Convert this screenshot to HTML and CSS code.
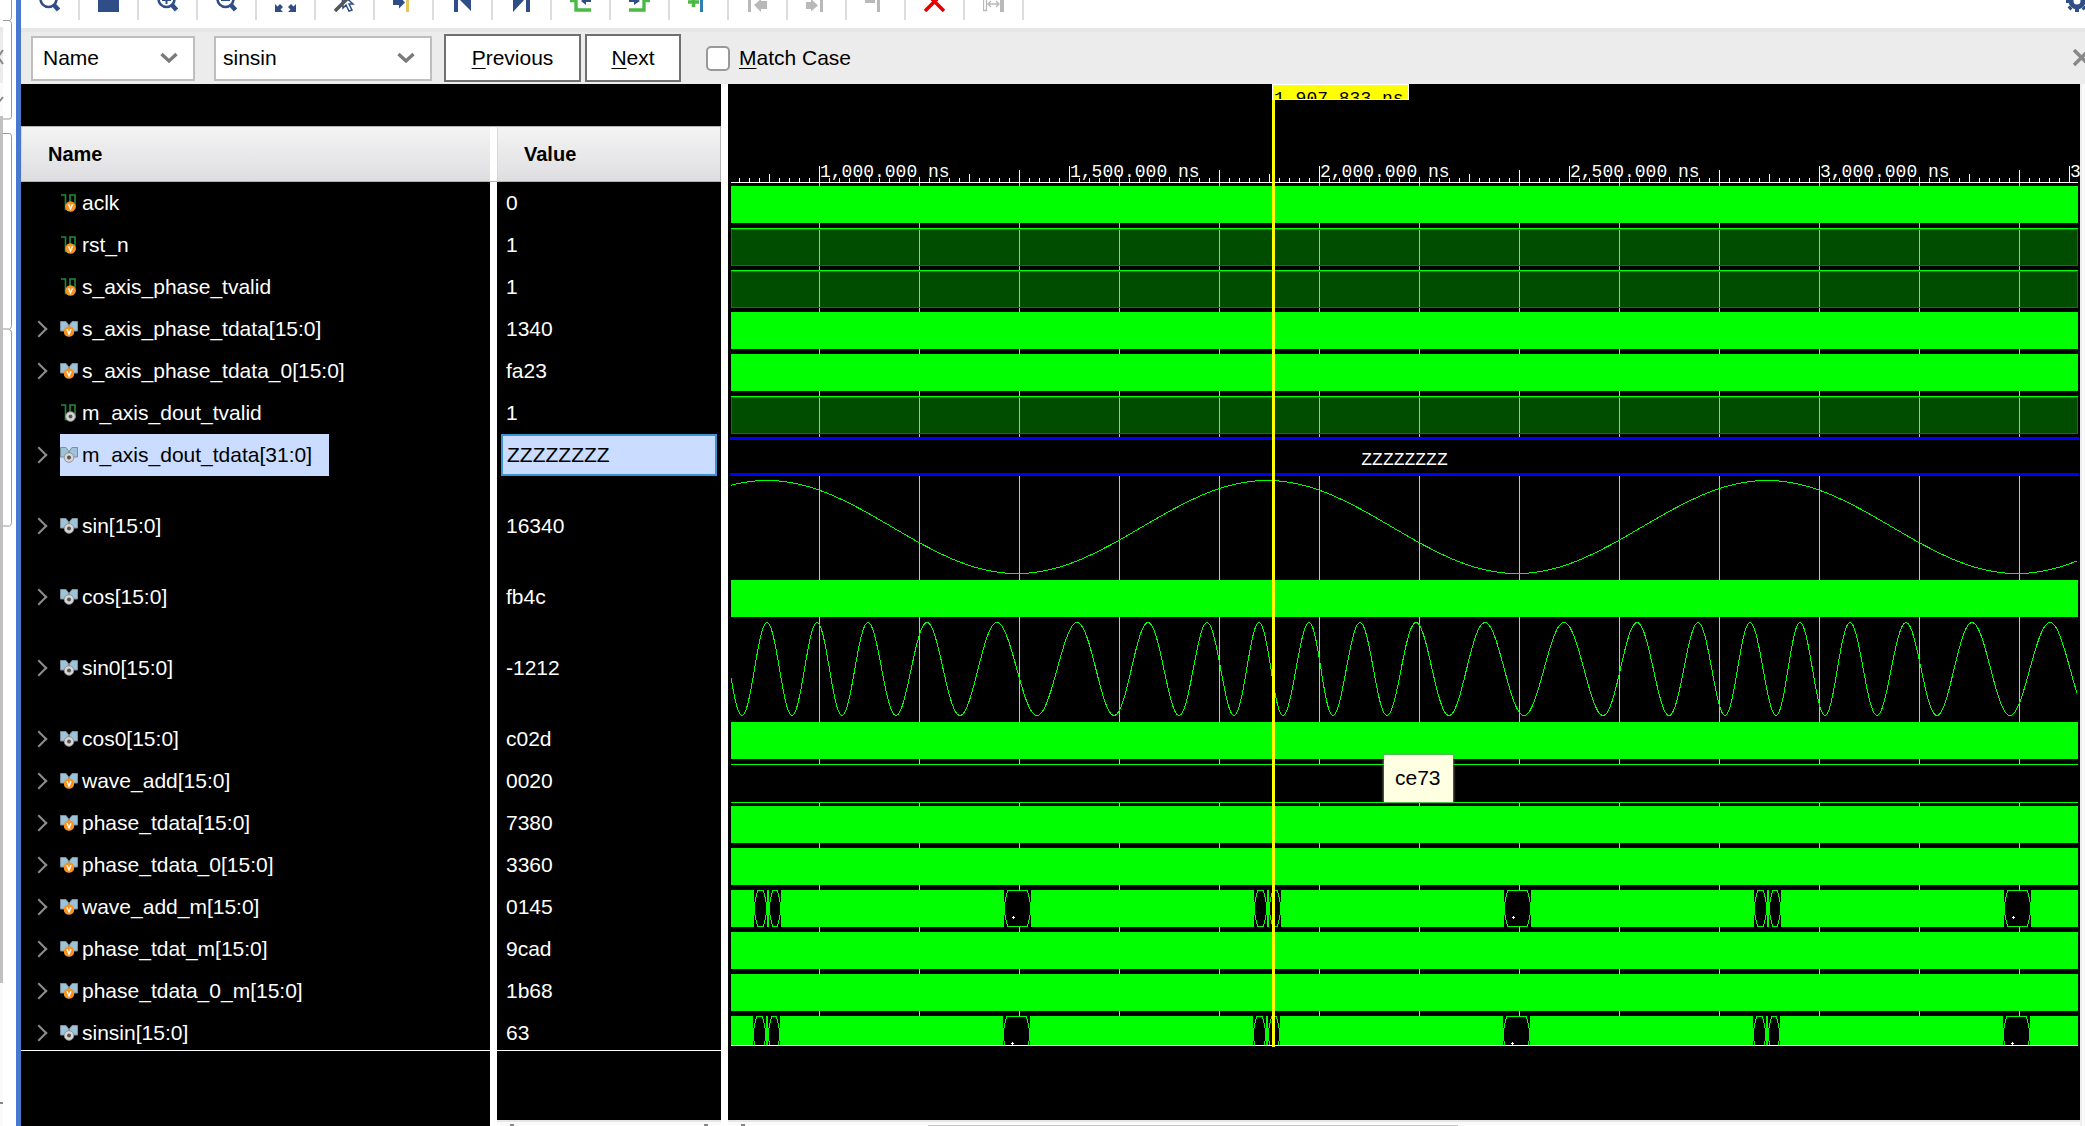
FILE: index.html
```html
<!DOCTYPE html>
<html lang="en">
<head>
<meta charset="utf-8">
<title>Waveform viewer</title>
<link rel="stylesheet" href="styles.css">
</head>
<body>
<svg class="defs" aria-hidden="true">
  <symbol id="badge-v" viewBox="0 0 10 10"><circle cx="5" cy="5" r="4.8" fill="#f7931e"/><path d="M3.2 3 5 7.2 6.8 3" fill="none" stroke="#fff" stroke-width="1.3"/></symbol>
  <symbol id="badge-o" viewBox="0 0 10 10"><circle cx="5" cy="5" r="4.4" fill="#d6d6d6" stroke="#8c8c8c" stroke-width=".8"/><circle cx="5" cy="5" r="1.8" fill="#555"/></symbol>
  <symbol id="wire" viewBox="0 0 18 18"><path d="M1 1h4.5v14.5H10V1h5v13" fill="none" stroke="#1f8a3a" stroke-width="1.6"/></symbol>
  <symbol id="bus" viewBox="0 0 18 18"><path d="M.5 1.5H6l3 4-3 5.5H.5zM17.500 1.500H12l-3 4 3 5.500h5.500z" fill="#9cc3d8" stroke="#7b8f9c"/></symbol>
  <symbol id="wire-v" viewBox="0 0 18 18"><use href="#wire" width="18" height="18"/><use href="#badge-v" x="5" y="7" width="11" height="11"/></symbol>
  <symbol id="wire-o" viewBox="0 0 18 18"><use href="#wire" width="18" height="18"/><use href="#badge-o" x="5" y="7" width="11" height="11"/></symbol>
  <symbol id="bus-v" viewBox="0 0 18 18"><use href="#bus" width="18" height="18"/><use href="#badge-v" x="3.500" y="6" width="11" height="11"/></symbol>
  <symbol id="bus-o" viewBox="0 0 18 18"><use href="#bus" width="18" height="18"/><use href="#badge-o" x="3.500" y="6" width="11" height="11"/></symbol>
  <symbol id="lens" viewBox="0 0 21 22"><circle cx="9.500" cy="9" r="8" fill="none" stroke="#2f4e87" stroke-width="2.600"/><path d="m15 15 4.500 5" stroke="#2f4e87" stroke-width="4.500"/></symbol>
  <symbol id="chev" viewBox="0 0 18 12"><path d="m1.500 2 7.500 7 7.500-7" fill="none" stroke="#7a7a7a" stroke-width="3.400"/></symbol>
</svg>

<div class="app">
  <aside class="neighbor">
    <svg width="16" height="1126" viewBox="0 0 16 1126" aria-hidden="true">
      <path fill="#e6e6e6" d="M0 27h3v4H0z"/><path fill="#ececec" d="M0 31h3v52H0z"/><path fill="#fafafa" d="M0 83h3v1043H0z"/>
      <path fill="#c0c0c0" d="M0 116h3v867H0z"/>
      <path d="m3 50-5 7 5 7M3 97l-4 5M0 1103h3" fill="none" stroke="#888" stroke-width="2"/>
      <path d="M11.500 0v17q0 3-2 3.500H3M9 20.500q2.500.5 2.500 3v93q0 2.500-2 2.500H3M3 133.500h6.500q2 0 2 3v189q0 3-2 3.500H3M9 329.500q2.500.5 2.500 3v190q0 3-2 3.500H3" fill="none" stroke="#999"/>
    </svg>
  </aside>

  <main class="viewer">
    <div class="toolbar" role="toolbar" aria-label="Waveform">
      <button aria-label="Search"><svg class="ti"><use href="#lens"/></svg></button>
      <button aria-label="Save"><svg class="ti"><path fill="#2f4e87" d="M0 2h21v20H0z"/></svg></button>
      <button aria-label="Zoom in"><svg class="ti"><use href="#lens"/><path d="M5 10h9M9.500 5v9" stroke="#2f4e87" stroke-width="2"/></svg></button>
      <button aria-label="Zoom out"><svg class="ti"><use href="#lens"/><path d="M5 10h9" stroke="#2f4e87" stroke-width="2"/></svg></button>
      <button aria-label="Zoom fit"><svg class="ti"><path d="M0 14v8h8l-2.500-2.500L8 17l-3-3-2.500 2.500zM21 14v8h-8l2.500-2.500L13 17l3-3 2.500 2.500z" fill="#2f4e87"/></svg></button>
      <button aria-label="Select"><svg class="ti"><path d="m8 4 1 14 3-3 3 6 3-1-3-6h4z" fill="#fff" stroke="#2f4e87" stroke-width="1.500"/><path d="M1 21 14 8" stroke="#555" stroke-width="3.500"/></svg></button>
      <button aria-label="Go to cursor"><svg class="ti"><path d="M0 9h5V5l7 7.500-6 6V15H0z" fill="#2f4e87"/><path fill="#e3c75b" d="M13 0h3v22h-3z"/></svg></button>
      <button aria-label="Go to start"><svg class="ti"><path fill="#2f4e87" d="M2 0h4v22H2zM19 1v20L8 10z"/></svg></button>
      <button aria-label="Go to end"><svg class="ti"><path fill="#2f4e87" d="M15 0h4v22h-4zM2 0v22l11-12z"/></svg></button>
      <button aria-label="Previous transition"><svg class="ti"><path d="M0 10.500h6V20h15" fill="none" stroke="#4cb944" stroke-width="3.400"/><path d="M21 9v3h-5v3l-5-4 5-4v2z" fill="#2f4e87"/></svg></button>
      <button aria-label="Next transition"><svg class="ti"><path d="M0 20h15v-9.500h6" fill="none" stroke="#4cb944" stroke-width="3.400"/><path d="M0 9v3h5v3l6-4-6-4v2z" fill="#2f4e87"/></svg></button>
      <button aria-label="Add marker"><svg class="ti"><path d="M0 12h11M5.500 5v12" stroke="#4cb944" stroke-width="3.500"/><path fill="#2f7fb5" d="M12 0h3v22h-3z"/></svg></button>
      <button aria-label="Previous marker"><svg class="ti"><path fill="#b9b9b9" d="M1 0h3v22H1zM20 11v8h-6v3l-7-7 7-6v2z"/></svg></button>
      <button aria-label="Next marker"><svg class="ti"><path fill="#b9b9b9" d="M14 0h3v22h-3zM0 12h5V9l7 6.500-7 6V19H0z"/></svg></button>
      <button aria-label="Remove marker"><svg class="ti"><path fill="#b9b9b9" d="M12 0h3v22h-3zM0 10h10v3H0z"/></svg></button>
      <button aria-label="Delete"><svg class="ti"><path d="M1 2l19 19M20 2 1 21" stroke="#e80000" stroke-width="3.600"/></svg></button>
      <button aria-label="Swap cursors"><svg class="ti"><path fill="#b9b9b9" d="M17 0h4v22h-4z"/><path d="M.5 0v20.500h3V0M5 14h11M8 11l-3 3 3 3M13 11l3 3-3 3" fill="none" stroke="#b9b9b9" stroke-width="1.300"/></svg></button>
      <button class="settings" aria-label="Settings"><svg class="ti"><circle cx="11" cy="11" r="6" fill="none" stroke="#2f4e87" stroke-width="5"/><path d="M11 19v3M5 17l-2 2M17 17l2 2M0 11h3" stroke="#2f4e87" stroke-width="4"/></svg></button>
    </div>

    <form class="findbar">
      <span class="combo combo-field"><select aria-label="Search field"><option>Name</option></select><svg class="chev"><use href="#chev"/></svg></span>
      <span class="combo combo-text"><input type="text" value="sinsin" aria-label="Search text"><svg class="chev"><use href="#chev"/></svg></span>
      <span class="pair">
        <button type="button" class="btn btn-prev"><u>P</u>revious</button>
        <button type="button" class="btn btn-next"><u>N</u>ext</button>
      </span>
      <label class="match"><input type="checkbox"><span><u>M</u>atch Case</span></label>
      <button type="button" class="close" aria-label="Close"><svg width="18" height="18"><path d="m1 1 15 15M16 1 1 16" stroke="#888" stroke-width="3.500"/></svg></button>
    </form>

    <div class="panes">
      <section class="signals">
        <table>
          <colgroup><col class="c-name"><col class="c-value"></colgroup>
          <thead><tr><th scope="col">Name</th><th scope="col">Value</th></tr></thead>
          <tbody>
            <tr><td><div class="sig leaf"><svg><use href="#wire-v"/></svg>aclk</div></td><td>0</td></tr>
            <tr><td><div class="sig leaf"><svg><use href="#wire-v"/></svg>rst_n</div></td><td>1</td></tr>
            <tr><td><div class="sig leaf"><svg><use href="#wire-v"/></svg>s_axis_phase_tvalid</div></td><td>1</td></tr>
            <tr><td><div class="sig"><svg><use href="#bus-v"/></svg>s_axis_phase_tdata[15:0]</div></td><td>1340</td></tr>
            <tr><td><div class="sig"><svg><use href="#bus-v"/></svg>s_axis_phase_tdata_0[15:0]</div></td><td>fa23</td></tr>
            <tr><td><div class="sig leaf"><svg><use href="#wire-o"/></svg>m_axis_dout_tvalid</div></td><td>1</td></tr>
            <tr class="selected"><td><div class="sig"><svg><use href="#bus-o"/></svg>m_axis_dout_tdata[31:0]</div></td><td><div class="cell">ZZZZZZZZ</div></td></tr>
            <tr class="tall"><td><div class="sig"><svg><use href="#bus-o"/></svg>sin[15:0]</div></td><td>16340</td></tr>
            <tr><td><div class="sig"><svg><use href="#bus-o"/></svg>cos[15:0]</div></td><td>fb4c</td></tr>
            <tr class="tall"><td><div class="sig"><svg><use href="#bus-o"/></svg>sin0[15:0]</div></td><td>-1212</td></tr>
            <tr><td><div class="sig"><svg><use href="#bus-o"/></svg>cos0[15:0]</div></td><td>c02d</td></tr>
            <tr><td><div class="sig"><svg><use href="#bus-v"/></svg>wave_add[15:0]</div></td><td>0020</td></tr>
            <tr><td><div class="sig"><svg><use href="#bus-v"/></svg>phase_tdata[15:0]</div></td><td>7380</td></tr>
            <tr><td><div class="sig"><svg><use href="#bus-v"/></svg>phase_tdata_0[15:0]</div></td><td>3360</td></tr>
            <tr><td><div class="sig"><svg><use href="#bus-v"/></svg>wave_add_m[15:0]</div></td><td>0145</td></tr>
            <tr><td><div class="sig"><svg><use href="#bus-v"/></svg>phase_tdat_m[15:0]</div></td><td>9cad</td></tr>
            <tr><td><div class="sig"><svg><use href="#bus-v"/></svg>phase_tdata_0_m[15:0]</div></td><td>1b68</td></tr>
            <tr class="last"><td><div class="sig"><svg><use href="#bus-o"/></svg>sinsin[15:0]</div></td><td>63</td></tr>
          </tbody>
        </table>
        <div class="below">
          <div class="below-name"></div>
          <div class="below-value"><div class="hscroll"><i class="tip"></i><i class="tip"></i></div></div>
        </div>
      </section>

      <section class="waves">
        <div class="plot">
          <div class="ruler"><svg id="ruler" width="100%" height="98"></svg></div>
          <div class="lanes">
            <div class="lane solid"></div>
            <div class="lane high"></div>
            <div class="lane high"></div>
            <div class="lane solid"></div>
            <div class="lane solid"></div>
            <div class="lane high"></div>
            <div class="lane floating"><span>ZZZZZZZZ</span></div>
            <div class="lane analog"><svg id="sin" width="100%" height="100"></svg></div>
            <div class="lane solid"></div>
            <div class="lane analog"><svg id="sin0" width="100%" height="100"></svg></div>
            <div class="lane solid"></div>
            <div class="lane empty"></div>
            <div class="lane solid"></div>
            <div class="lane solid"></div>
            <div class="lane solid"><svg class="gaps" data-shift="0" width="100%" height="37"></svg></div>
            <div class="lane solid"></div>
            <div class="lane solid"></div>
            <div class="lane solid cut"><svg class="gaps" data-shift="-1" width="100%" height="37"></svg></div>
          </div>
          <div class="cursor-label">1,907.833 ns</div>
          <div class="cursor-line"></div>
          <div class="tooltip" role="tooltip">ce73</div>
        </div>
        <div class="hscroll wave-scroll"><i class="tip"></i><i class="thumb"></i></div>
      </section>
      <div class="vscroll"></div>
    </div>
  </main>
</div>
<script src="waves.js"></script>
</body>
</html>
```
FILE: styles.css
```css
* { box-sizing: border-box; }
body {
  margin: 0;
  background: #fff;
  color: #000;
  font: 21px/24px "Liberation Sans", Arial, sans-serif;
  overflow: hidden;
}
button, input, select { font: inherit; color: inherit; }
.defs { position: absolute; width: 0; height: 0; }

.app { display: flex; height: 100vh; }
.neighbor { flex: none; width: 16px; overflow: hidden; }
.viewer {
  flex: 1;
  min-width: 0;
  display: flex;
  flex-direction: column;
  border-left: 5px solid #4878d0;
}

/* toolbar */
.toolbar {
  display: flex;
  flex: none;
  height: 32px;
  border-bottom: 4px solid #e6e6e6;
  overflow: hidden;
}
.toolbar button {
  flex: none;
  width: 59px;
  height: 20px;
  padding: 0;
  border: 0;
  border-right: 2px solid #dcdcdc;
  background: none;
  display: flex;
  justify-content: center;
  align-items: flex-end;
}
.ti { flex: none; width: 21px; height: 22px; margin-bottom: 8px; }
.toolbar .settings { width: 21px; margin-left: auto; margin-right: -2px; border: 0; }

/* find bar */
.findbar {
  flex: none;
  display: flex;
  align-items: center;
  height: 52px;
  padding-left: 10px;
  background: #ececec;
  overflow: hidden;
}
.combo {
  display: flex;
  align-items: center;
  height: 45px;
  border: 2px solid #bebebe;
  background: #fff;
  padding-right: 15px;
}
.combo-field { width: 164px; margin-right: 19px; }
.combo-text { width: 218px; margin-right: 12px; }
.combo select, .combo input {
  appearance: none;
  flex: 1;
  min-width: 0;
  height: 40px;
  padding: 0 0 0 10px;
  border: 0;
  background: none;
  outline: 0;
}
.combo-text input { padding-left: 7px; }
.chev { flex: none; width: 18px; height: 12px; }
.pair { display: flex; gap: 4px; }
.btn {
  height: 48px;
  padding: 0;
  background: #fff;
  border: 2px solid #707070;
}
.btn-prev { width: 137px; }
.btn-next { width: 96px; }
.match { display: flex; align-items: center; gap: 9px; margin-left: 25px; }
.match input {
  appearance: none;
  width: 24px;
  height: 25px;
  margin: 0;
  border: 2px solid #999;
  border-radius: 5px;
  background: #fff;
}
u { text-underline-offset: 3px; text-decoration-thickness: 1px; }
.close { margin-left: auto; margin-right: -6px; padding: 0; border: 0; background: none; height: 18px; line-height: 0; }

/* panes */
.panes { flex: 1; min-height: 0; display: flex; background: #fff; }
.signals {
  flex: none;
  width: 700px;
  margin-right: 7px;
  padding-top: 42px;
  display: flex;
  flex-direction: column;
  background: #000;
  color: #fff;
}
.signals table { width: 100%; table-layout: fixed; border-collapse: separate; border-spacing: 0; }
.c-name { width: 476px; }
.signals th {
  height: 56px;
  padding: 0 0 0 26px;
  text-align: left;
  font-size: 20px;
  color: #000;
  background: linear-gradient(#f4f4f4, #dedee1);
  border: 1px solid #b4b4b4;
  border-left-color: #d8d8d8;
}
.signals th:first-child { border-right: 0; box-shadow: inset -7px 0 #fff; }
.signals td { height: 42px; padding: 0 0 0 9px; }
.signals td:first-child { padding: 0 0 0 17px; border-right: 7px solid #fff; }
.signals .tall td { height: 100px; }
.signals .last td { height: 39px; padding-top: 3px; border-bottom: 1px solid #fff; }
.sig { display: flex; align-items: center; height: 42px; }
.last .sig { height: 35px; }
.sig svg { flex: none; width: 18px; height: 18px; margin-right: 4px; }
.sig::before {
  content: "";
  flex: none;
  width: 10px;
  height: 10px;
  margin-right: 15px;
  margin-left: -5px;
  border: solid #8c8c8c;
  border-width: 2px 2px 0 0;
  transform: rotate(45deg);
}
.sig.leaf::before { visibility: hidden; }
.selected td:first-child { background: linear-gradient(#cadcff, #cadcff) 39px 0 / 269px 100% no-repeat; color: #000; }
.selected td:last-child { padding: 0 4px; }
.cell {
  height: 42px;
  padding: 0 4px;
  line-height: 38px;
  color: #000;
  background: #cadcff;
  border: 2px solid #3b94d2;
}
.below { flex: 1; display: flex; }
.below-name { width: 476px; border-right: 7px solid #fff; }
.below-value { flex: 1; display: flex; align-items: flex-end; }
.hscroll {
  flex: 1;
  height: 6px;
  border-top: 2px solid #e6e6e6;
  background: #fafafa;
  display: flex;
  justify-content: space-between;
  padding: 2px 13px 0;
}
.tip { width: 4px; height: 2px; background: #888; }

/* waveforms */
.waves { flex: 1; min-width: 0; display: flex; flex-direction: column; background: #000; }
.plot { flex: 1; min-height: 0; position: relative; margin: 0 2px 0 3px; }
.ruler { height: 98px; }
.ruler svg { display: block; overflow: visible; clip-path: inset(0 -2px -1px 0); }
.ruler text, .floating, .cursor-label { font-family: "Liberation Mono", monospace; font-size: 18px; }
.lanes {
  background: linear-gradient(90deg, #c0c0c0 1px, transparent 1px) -12px 0 / 100px 100%;
  border-bottom: 1px solid #fff;
}
.lane { height: 42px; padding: 4px 0 1px; }
.lane svg { display: block; }
.solid { background: #0f0 content-box; }
.high::before {
  content: "";
  display: block;
  height: 37px;
  border-top: 1px solid #0f0;
  background: rgba(0, 255, 0, .3);
  box-shadow: inset 0 1px #008000, inset 1px -1px #008000, inset -1px 0 #008000;
}
.floating {
  padding: 5px 0 0;
  margin: 0 -1px;
  color: #fff;
  text-align: center;
  line-height: 43px;
  position: relative;
}
.floating::before {
  content: "";
  position: absolute;
  inset: 3px 0 0;
  border: solid #00f;
  border-width: 3px 0;
  background: #000;
}
.floating span { position: relative; }
.analog { height: 100px; padding: 0; }
.analog path { fill: none; stroke: #0f0; stroke-width: 1; shape-rendering: crispEdges; }
.empty::before {
  content: "";
  display: block;
  height: 37px;
  border: solid #0f0;
  border-width: 1px 0;
  background: #000;
}
.cut { height: 33px; padding-bottom: 0; overflow: hidden; }
.gaps { shape-rendering: crispEdges; }
.cursor-label {
  position: absolute;
  left: 541px;
  top: 0;
  width: 137px;
  height: 16px;
  padding: 4px 0 0 1px;
  line-height: 20px;
  white-space: nowrap;
  overflow: hidden;
  color: #000;
  background: #ff0;
  border: 1px solid #fff;
}
.cursor-line { position: absolute; left: 541px; top: 16px; width: 3px; height: 947px; background: #ff0; }
.tooltip {
  position: absolute;
  left: 653px;
  top: 671px;
  padding: 11px 12px 12px 11px;
  color: #000;
  background: #ffffe1;
  box-shadow: 0 0 2px 1px rgba(140, 140, 140, .8);
}
.wave-scroll { flex: none; position: relative; }
.thumb { position: absolute; left: 200px; right: 46%; top: 3px; height: 1px; background: #c4c4c4; }
.vscroll { flex: none; width: 5px; border-left: 2px solid #eee; background: #fafafa; }
```
FILE: waves.js
```js
// Time axis: one pixel is 2 ns, and 1,000 ns lies 88px from the plot's left edge.
const ORIGIN = 88;
const ruler = document.getElementById('ruler');
const width = ruler.getBoundingClientRect().width;

let ticks = `M0 98.5H${width}`;
let labels = '';
for (let x = ORIGIN % 10; x < width; x += 10) {
  const offset = x - ORIGIN;
  let top = 94;
  if (offset % 250 === 0) top = 82;
  else if (offset % 100 === 0) top = 86;
  else if (offset % 50 === 0) top = 90;
  ticks += `M${x + 0.5} ${top}V98`;
}
for (let x = ORIGIN; x < width; x += 250) {
  const ns = 1000 + (x - ORIGIN) * 2;
  const label = ns.toLocaleString('en-US') + '.000 ns';
  labels += `<rect x="${x + 2}" y="80" width="128" height="13" fill="#000"/>` +
            `<text x="${x + 1}" y="93" fill="#fff">${label}</text>`;
}
ruler.innerHTML = `<path d="${ticks}" fill="none" stroke="#fff"/>${labels}`;

// Slow sine: 500px period.
let slow = '';
for (let x = 0; x < width; x += 2) {
  const y = 51 - 46.5 * Math.cos((x - 36) / 500 * 2 * Math.PI);
  slow += (x ? 'L' : 'M') + x + ' ' + y.toFixed(1);
}
document.getElementById('sin').innerHTML = `<path d="${slow}"/>`;

// Frequency-modulated sine: positions of its alternating peaks and troughs.
const turns = [-39, -14, 11, 36, 61, 86, 111, 137, 165, 196, 229, 266, 306, 346, 383, 417, 448, 476,
  503, 528, 552, 578, 602, 629, 656, 685, 718, 754, 793, 833, 872, 906, 938, 967, 994, 1019, 1045,
  1069, 1094, 1119, 1146, 1175, 1206, 1241, 1279, 1319, 1359, 1398, 1434];
let fast = '';
for (let i = 1; i < turns.length - 2; i++) {
  const a = turns[i], b = turns[i + 1], h = b - a;
  const ma = 2 * h / (b - turns[i - 1]);
  const mb = 2 * h / (turns[i + 2] - a);
  for (let x = Math.max(a, 0); x < b && x < width; x++) {
    const t = (x - a) / h;
    const p = (t ** 3 - 2 * t * t + t) * ma + (3 * t * t - 2 * t ** 3) + (t ** 3 - t * t) * mb;
    const y = 51 - 46.5 * Math.cos((i + 1 + p) * Math.PI);
    fast += (fast ? 'L' : 'M') + x + ' ' + y.toFixed(1);
  }
}
document.getElementById('sin0').innerHTML = `<path d="${fast}"/>`;

// Bus values wide enough to be drawn between the dense transitions.
function cell(x, w) {
  return `<rect x="${x}" width="${w}" height="37" fill="#000"/>` +
    `<path d="M${x + 3.5} .5H${x + w - 3.5}L${x + w - 0.5} 14V23L${x + w - 3.5} 36.500H${x + 3.5}L${x + 0.5} 23V14z" fill="#000" stroke="#0f0"/>`;
}
for (const svg of document.querySelectorAll('.gaps')) {
  const shift = Number(svg.dataset.shift);
  let out = '';
  for (let x = 23 + shift; x < width; x += 500) {
    out += cell(x, 13) + cell(x + 15, 12) + cell(x + 250, 27) +
      `<path d="M${x + 258} 27h3v1h-3zM${x + 259} 26h1v3h-1z" fill="#fff"/>`;
  }
  svg.innerHTML = out;
}
```
